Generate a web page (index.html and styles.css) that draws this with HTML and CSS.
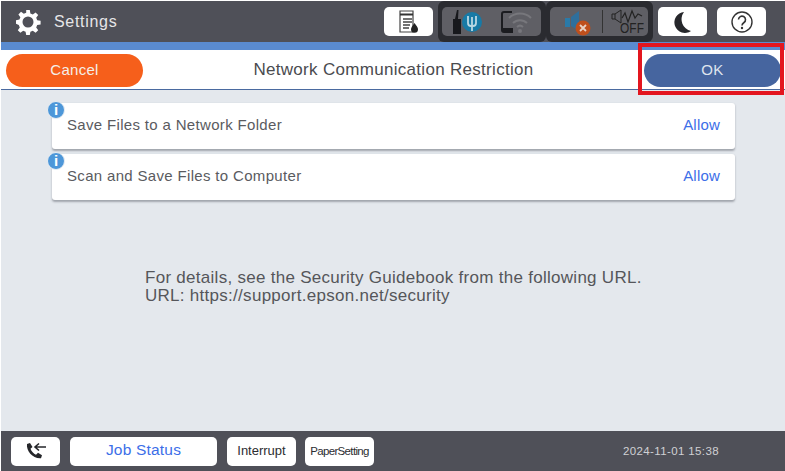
FILE: index.html
```html
<!DOCTYPE html>
<html lang="en">
<head>
<meta charset="utf-8">
<title>Network Communication Restriction</title>
<link rel="stylesheet" href="styles.css">
</head>
<body>
<div class="screen">
  <header class="topbar">
    <svg class="gear" viewBox="0 0 26 26" width="26" height="26"><path fill="#fff" fill-rule="evenodd" d="M11.200 1h3.600l.6 3.400 2.400 1 2.800-2 2.600 2.600-2 2.800 1 2.400 3.400.6v3.600l-3.400.6-1 2.400 2 2.800-2.600 2.600-2.800-2-2.400 1-.6 3.400h-3.600l-.6-3.400-2.400-1-2.800 2-2.600-2.600 2-2.800-1-2.400L1 14.800v-3.600l3.400-.6 1-2.400-2-2.800L6 2.800l2.800 2 2.400-1zM13 7.500a5.500 5.500 0 1 0 0 11 5.500 5.500 0 0 0 0-11z"/></svg>
    <span class="app-title">Settings</span>
    <div class="top-tools">
      <button class="tool tool-first" type="button">
        <svg viewBox="0 0 22 24" width="22" height="24"><path d="M2 1h13v21H2z" fill="#fff" stroke="#444" stroke-width="1.200"/><path d="M2 4.500h13" stroke="#333" stroke-width="2"/><path d="M5 9h9M5 12h9M5 15h7M5 18h6" stroke="#444" stroke-width="1.400"/><path d="M16.500 13c2 3 3.500 4.300 3.500 6.300a3.500 3.500 0 0 1-7 0c0-2 1.500-3.300 3.500-6.300z" fill="#222"/></svg>
      </button>
      <div class="status-group">
        <div class="status-inner">
          <svg viewBox="0 0 32 26" width="32" height="26"><path d="M3 10l2-9h1.500L6 10h3v15H1V10z" fill="#17181c"/><circle cx="20" cy="13" r="10" fill="#177aa6"/><path d="M16 7v7a3 3 0 0 0 3 3h2a3 3 0 0 0 3-3V7" fill="none" stroke="#b8d8e4" stroke-width="1.800"/><path d="M20 8v14" stroke="#b8d8e4" stroke-width="1.800"/></svg>
          <svg viewBox="0 0 31 26" width="31" height="26"><path d="M11 3H3a2 2 0 0 0-2 2v16a2 2 0 0 0 2 2h9" fill="none" stroke="#1b1c20" stroke-width="2"/><rect x="2" y="19" width="10" height="4" fill="#1b1c20"/><path d="M8 9a16 16 0 0 1 22 0M12 14a10 10 0 0 1 14 0M16 18a4.500 4.500 0 0 1 6 0" fill="none" stroke="#77777c" stroke-width="2"/><circle cx="19" cy="22" r="2" fill="#77777c"/></svg>
        </div>
      </div>
      <div class="status-group">
        <div class="status-inner status-sound">
          <svg viewBox="0 0 28 28" width="28" height="28"><path d="M1 10h5v9H1z" fill="#2a7aa8"/><path d="M7 9l8-6v20l-8-5z" fill="#2f6f9c"/><circle cx="19" cy="20" r="7.500" fill="#bf4f1c"/><path d="M16 17l6 6M22 17l-6 6" stroke="#e9d2c4" stroke-width="1.800"/></svg>
          <span class="divider"></span>
          <div class="off-icon">
            <svg viewBox="0 0 34 16" width="34" height="16"><path d="M1 5h3v5H1zM4 5l6-4v13l-6-4" fill="none" stroke="#222" stroke-width="1"/><path d="M11 9l3-5 3 9 4-11 3 7 3-4 4 2" fill="none" stroke="#222" stroke-width="1.200"/></svg>
            <span class="off-label">OFF</span>
          </div>
        </div>
      </div>
      <button class="tool tool-moon" type="button">
        <svg viewBox="0 0 20 24" width="20" height="24"><path d="M11 2A10.500 10.500 0 1 0 18 21 12 12 0 0 1 11 2z" fill="#26272b"/></svg>
      </button>
      <button class="tool tool-help" type="button">
        <svg viewBox="0 0 24 24" width="24" height="24"><circle cx="12" cy="12" r="10" fill="none" stroke="#333" stroke-width="1.400"/><path d="M8.500 9.500a3.500 3.500 0 1 1 5.500 3c-1.300.9-2 1.500-2 3" fill="none" stroke="#333" stroke-width="1.600"/><circle cx="12" cy="18" r="1.200" fill="#333"/></svg>
      </button>
    </div>
  </header>

  <div class="accent"></div>

  <div class="actionbar">
    <button class="pill pill-cancel" type="button">Cancel</button>
    <h1 class="page-title">Network Communication Restriction</h1>
    <div class="ok-wrap">
      <button class="pill pill-ok" type="button">OK</button>
      <span class="highlight"></span>
    </div>
  </div>

  <main class="content">
    <div class="rows">
      <div class="row">
        <span class="info">i</span>
        <span class="row-label">Save Files to a Network Folder</span>
        <span class="row-value">Allow</span>
      </div>
      <div class="row">
        <span class="info">i</span>
        <span class="row-label">Scan and Save Files to Computer</span>
        <span class="row-value">Allow</span>
      </div>
    </div>
    <p class="note">For details, see the Security Guidebook from the following URL.<br>URL: https://support.epson.net/security</p>
  </main>

  <footer class="bottombar">
    <button class="foot-btn foot-phone" type="button">
      <svg viewBox="0 0 22 20" width="22" height="20"><path d="M2 3l3-1 2.500 4-2 1.800c1 2.800 3 4.700 5.500 6l2-2 4 2.500-1 3C8 18 1 10 2 3z" fill="#25262a"/><path d="M21 6H10M14 2.500L10 6l4 3.500" fill="none" stroke="#25262a" stroke-width="1.600"/></svg>
    </button>
    <button class="foot-btn foot-job" type="button">Job Status</button>
    <button class="foot-btn foot-small" type="button">Interrupt</button>
    <button class="foot-btn foot-small foot-paper" type="button">PaperSetting</button>
    <time class="clock">2024-11-01 15:38</time>
  </footer>
</div>
</body>
</html>
```

FILE: styles.css
```css
* { box-sizing: border-box; }
html, body { margin: 0; padding: 0; background: #fff; }
body { width: 785px; height: 471px; overflow: hidden; font-family: "Liberation Sans", Arial, sans-serif; }
button { font-family: inherit; border: 0; padding: 0; }
.screen { display: flex; flex-direction: column; height: 471px; padding: 1px 0 0 1px; }

.topbar { height: 41px; background: #4f5058; display: flex; align-items: center; padding-left: 14px; flex: none; }
.gear { flex: none; }
.app-title { margin-left: 13px; font-size: 16px; letter-spacing: .7px; color: #e6e6e8; }
.top-tools { margin-left: auto; display: flex; align-items: stretch; height: 41px; padding-right: 19px; }
.tool { width: 49px; height: 29px; margin-top: 6px; background: #fff; border-radius: 5px; display: flex; align-items: center; justify-content: center; }
.tool-first { margin-right: 5px; }
.tool-moon { margin-left: 5px; }
.tool-help { margin-left: 10px; }
.status-group { width: 107.500px; height: 41px; background: #2a2b30; border-radius: 6px; padding: 6px 5px 5px 4px; }
.status-inner { height: 29px; background: #5f5f65; border-radius: 5px; display: flex; align-items: center; gap: 17px; padding: 0 0 0 10px; }
.status-sound { gap: 10px; padding: 0 0 0 14px; }
.divider { width: 1px; height: 23px; background: #333; }
.off-icon { display: flex; flex-direction: column; align-items: center; width: 36px; margin-left: -3px; }
.off-label { font-size: 14px; line-height: 11px; color: #222; margin-top: -2px; margin-left: 8px; transform: scaleX(.85); }

.accent { height: 8px; background: #5a8bd0; flex: none; }

.actionbar { height: 40px; background: #fff; border-bottom: 1.500px solid #4a6aa0; display: flex; align-items: center; justify-content: space-between; padding: 2px 4px 0 5px; flex: none; }
.pill { width: 137px; height: 33px; border-radius: 17px; padding-bottom: 3px; font-size: 15px; letter-spacing: .3px; color: #f4efe9; flex: none; }
.pill-cancel { background: #f65f1b; }
.pill-ok { background: #46659f; color: #dfe4ee; display: block; }
.page-title { margin: 0 0 1px; font-size: 17px; letter-spacing: .3px; font-weight: 400; color: #4a4b4f; }
.ok-wrap { position: relative; }
.highlight { position: absolute; left: -6px; top: -11px; width: 146px; height: 52px; border: 4px solid #e3161f; pointer-events: none; }

.content { flex: 1; background: #e4e8ed; padding: 13px 50px 0 51px; }
.rows { display: flex; flex-direction: column; gap: 5px; }
.row { position: relative; height: 46px; background: #fff; border-radius: 3px; box-shadow: 0 1.500px 2px rgba(80, 85, 95, .45); display: flex; align-items: center; justify-content: space-between; padding: 0 15px 3px 15px; }
.info { position: absolute; left: -5px; top: -2px; width: 18px; height: 18px; border-radius: 50%; background: #4d97d9; border: 1px solid #e9eef3; color: #fff; font: 700 15px/16px "Liberation Sans", sans-serif; text-align: center; }
.row-label { font-size: 15px; letter-spacing: .33px; color: #5a5b5f; }
.row-value { font-size: 15px; letter-spacing: .2px; color: #3c6ee8; }
.note { margin: 69px 0 0 93px; font-size: 17px; letter-spacing: .28px; line-height: 18px; color: #55565a; }

.bottombar { height: 40px; background: #4f5058; display: flex; align-items: center; padding: 0 66px 0 10px; flex: none; }
.foot-btn { height: 29px; background: #fff; border-radius: 5px; display: flex; align-items: center; justify-content: center; color: #2c2d31; }
.foot-phone { width: 49px; }
.foot-job { width: 147px; margin-left: 10px; padding-bottom: 2px; color: #3c6ee8; font-size: 15.500px; letter-spacing: .2px; }
.foot-small { width: 69px; margin-left: 10px; padding-bottom: 1px; font-size: 13px; }
.foot-paper { margin-left: 9px; font-size: 11.500px; letter-spacing: -.65px; }
.clock { margin-left: auto; font-size: 11.500px; letter-spacing: .38px; color: #d0d1d4; }
```
